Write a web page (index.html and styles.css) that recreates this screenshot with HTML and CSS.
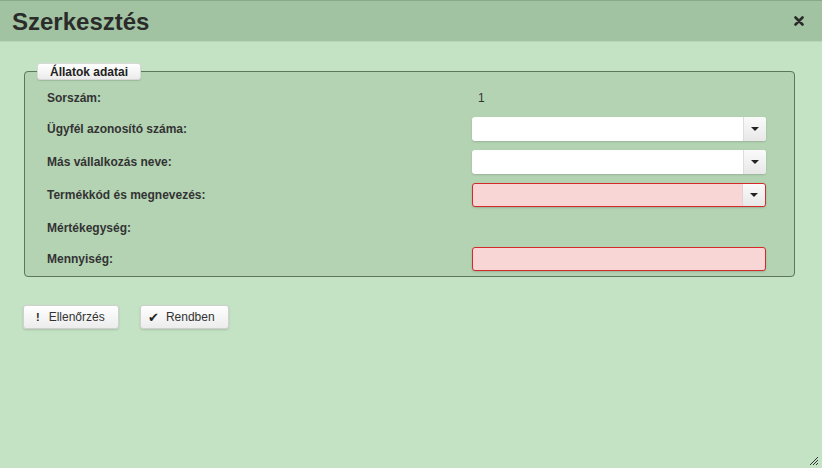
FILE: index.html
```html
<!DOCTYPE html>
<html>
<head>
<meta charset="utf-8">
<link rel="stylesheet" href="styles.css">
</head>
<body>
<div class="dialog">
  <div class="titlebar">
    <span class="title">Szerkesztés</span>
    <span class="close">
      <svg width="10" height="10" viewBox="0 0 10 10"><path d="M1.5 1.5 L8.5 8.5 M8.5 1.5 L1.5 8.5" stroke="#2b2b2b" stroke-width="2.6" stroke-linecap="round"/></svg>
    </span>
  </div>
  <div class="content">
    <fieldset class="group">
      <legend class="legend">Állatok adatai</legend>
      <div class="row first">
        <label class="lbl">Sorszám:</label>
        <span class="val">1</span>
      </div>
      <div class="row">
        <label class="lbl">Ügyfél azonosító száma:</label>
        <div class="combo"><span class="arrow"></span></div>
      </div>
      <div class="row">
        <label class="lbl">Más vállalkozás neve:</label>
        <div class="combo"><span class="arrow"></span></div>
      </div>
      <div class="row">
        <label class="lbl">Termékkód és megnevezés:</label>
        <div class="combo invalid"><span class="arrow"></span></div>
      </div>
      <div class="row short">
        <label class="lbl">Mértékegység:</label>
      </div>
      <div class="row last">
        <label class="lbl">Mennyiség:</label>
        <div class="text invalid"></div>
      </div>
    </fieldset>
    <div class="buttons">
      <button class="btn btn-check"><span class="ico excl">!</span>Ellenőrzés</button>
      <button class="btn btn-ok"><span class="ico chk">✔</span>Rendben</button>
    </div>
  </div>
  <span class="resize">
    <svg width="10" height="10" viewBox="0 0 10 10"><path d="M9 1 L1 9 M9 4 L4 9 M9 7 L7 9" stroke="#333" stroke-width="1"/></svg>
  </span>
</div>
</body>
</html>
```

FILE: styles.css
```css
html, body {
  margin: 0;
  padding: 0;
}
body {
  background: #c4e2c4;
  font-family: "Liberation Sans", Arial, sans-serif;
  color: #333;
  width: 822px;
  height: 468px;
  overflow: hidden;
}
.dialog {
  position: relative;
  width: 822px;
  height: 468px;
}
.titlebar {
  height: 40px;
  background: #a1c3a1;
  border-top: 1px solid #8aa88a;
  border-bottom: 1px solid #b7d6b7;
  display: flex;
  align-items: center;
  justify-content: space-between;
  padding: 0 18px 0 12px;
}
.title {
  font-size: 24px;
  font-weight: bold;
  color: #2b2b2b;
  margin-top: 2px;
}
.close {
  display: flex;
}
.content {
  padding: 21px 27px 0 24px;
}
.group {
  margin: 0;
  border: 1px solid #5d775d;
  border-radius: 4px;
  background: #b3d3b3;
  padding: 6px 28px 5px 22px;
}
.legend {
  margin-left: -10px;
  padding: 0 12px;
  height: 17px;
  line-height: 17px;
  font-size: 12px;
  font-weight: bold;
  color: #222;
  background: linear-gradient(#ffffff, #ececec);
  border: 1px solid #d8d8d8;
  border-radius: 3px;
  box-shadow: 0 1px 1px rgba(0,0,0,0.12);
  box-sizing: border-box;
}
.row {
  display: flex;
  align-items: center;
  height: 24px;
  margin-bottom: 9px;
}
.row.first,
.row.short {
  margin-bottom: 7px;
}
.row.last {
  margin-bottom: 0;
}
.lbl {
  width: 425px;
  font-size: 12px;
  font-weight: bold;
  color: #333;
}
.val {
  font-size: 12px;
  color: #333;
  padding-left: 6px;
}
.combo, .text {
  width: 294px;
  height: 24px;
  box-sizing: border-box;
  background: #fff;
  border-radius: 3px;
  box-shadow: 0 1px 2px rgba(0,0,0,0.15);
  display: flex;
  justify-content: flex-end;
}
.combo .arrow {
  width: 23px;
  height: 100%;
  box-sizing: border-box;
  border-left: 1px solid #dcdcdc;
  background: linear-gradient(#fafafa, #e8e8e8);
  border-radius: 0 3px 3px 0;
  display: flex;
  align-items: center;
  justify-content: center;
}
.combo .arrow::after {
  content: "";
  width: 0;
  height: 0;
  border-left: 4px solid transparent;
  border-right: 4px solid transparent;
  border-top: 4px solid #222;
}
.invalid {
  background: #f8d6d6;
  border: 1px solid #d42a2a;
}
.invalid .arrow {
  border-left-color: #e3d0d0;
}
.buttons {
  display: flex;
  gap: 21px;
  margin-top: 28px;
  margin-left: -1px;
}
.btn {
  height: 24px;
  padding: 0 11px 0 12px;
  font-family: "Liberation Sans", Arial, sans-serif;
  font-size: 12px;
  color: #333;
  background: linear-gradient(#ffffff, #ececec);
  border: 1px solid #d0d0d0;
  border-radius: 3px;
  box-shadow: 0 1px 2px rgba(0,0,0,0.15);
  display: flex;
  align-items: center;
}
.btn-check {
  width: 96px;
}
.btn-ok {
  width: 89px;
  padding-left: 7px;
}
.ico {
  display: inline-block;
  font-weight: bold;
  color: #222;
}
.excl {
  font-size: 11px;
  margin-right: 9px;
}
.chk {
  font-family: "DejaVu Sans", sans-serif;
  font-size: 13px;
  margin-right: 7px;
}
.resize {
  position: absolute;
  right: 3px;
  bottom: 2px;
  display: flex;
}
```
